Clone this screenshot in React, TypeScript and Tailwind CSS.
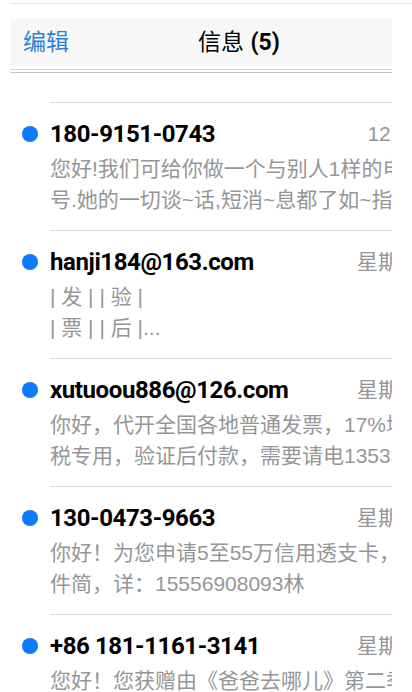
import React from 'react'

type Msg = {
    from: string
    time: string
    lines: string[]
}

const messages: Msg[] = [
    {
        from: '180-9151-0743',
        time: '12:45',
        lines: ['您好!我们可给你做一个与别人1样的电话', '号.她的一切谈~话,短消~息都了如~指掌'],
    },
    {
        from: 'hanji184@163.com',
        time: '星期三',
        lines: ['| 发 | | 验 |', '| 票 | | 后 |...'],
    },
    {
        from: 'xutuoou886@126.com',
        time: '星期二',
        lines: ['你好，代开全国各地普通发票，17%增值', '税专用，验证后付款，需要请电13533'],
    },
    {
        from: '130-0473-9663',
        time: '星期二',
        lines: ['你好！为您申请5至55万信用透支卡，条', '件简，详：15556908093林'],
    },
    {
        from: '+86 181-1161-3141',
        time: '星期一',
        lines: ['您好！您获赠由《爸爸去哪儿》第二季', '节目组送出的惊喜礼品'],
    },
]

const font = { fontFamily: '"Liberation Sans", "Noto Sans CJK SC", sans-serif' }
const titleFont = { fontFamily: 'Roboto, "Liberation Sans", sans-serif' }

function Row({ msg }: { msg: Msg }) {
    return (
        <div className="flex">
            <div className="w-[50px] shrink-0 pt-[24px] pl-[22px]">
                <div className="w-[16px] h-[16px] rounded-full bg-[#0a7cff]" />
            </div>
            <div className="w-[342px] shrink-0 overflow-hidden border-t border-[#dadada]">
                <div className="w-[370px] pt-[16px] pb-[15px]">
                    <div className="flex justify-between items-center h-[30px]">
                        <span
                            className="text-[24px] leading-[30px] font-bold text-black tracking-[-0.4px] whitespace-nowrap"
                            style={titleFont}
                        >
                            {msg.from}
                        </span>
                        <span className="text-[21px] leading-[30px] text-[#959598] whitespace-nowrap">{msg.time}</span>
                    </div>
                    <div className="mt-[4px] text-[21px] leading-[31px] text-[#969696]">
                        {msg.lines.map((l, i) => (
                            <div key={i} className="whitespace-pre">
                                {l}
                            </div>
                        ))}
                    </div>
                </div>
            </div>
        </div>
    )
}

export default function App() {
    return (
        <div className="w-[412px] h-[692px] bg-white overflow-hidden" style={font}>
            <div className="pt-[3px]">
                <div className="ml-[10px] h-px bg-[#e4e4e4]" />
            </div>

            <div className="mt-[15px] ml-[10px] w-[382px] h-[47px] bg-[#f7f7f7] flex items-center">
                <div className="w-[188px] pl-[13px] text-[23px] text-[#2d82d8]">编辑</div>
                <div className="text-[23px] text-black whitespace-nowrap">
                    <span>信息</span> <span className="font-bold" style={titleFont}>(5)</span>
                </div>
            </div>

            <div className="ml-[10px] w-[382px] mt-[3px]">
                <div className="h-px bg-[#d6d6d6]" />
                <div className="h-[2px]" />
                <div className="h-px bg-[#c4c4c4]" />
            </div>

            <div className="mt-[29px]">
                {messages.map((m, i) => (
                    <Row key={i} msg={m} />
                ))}
            </div>
        </div>
    )
}
